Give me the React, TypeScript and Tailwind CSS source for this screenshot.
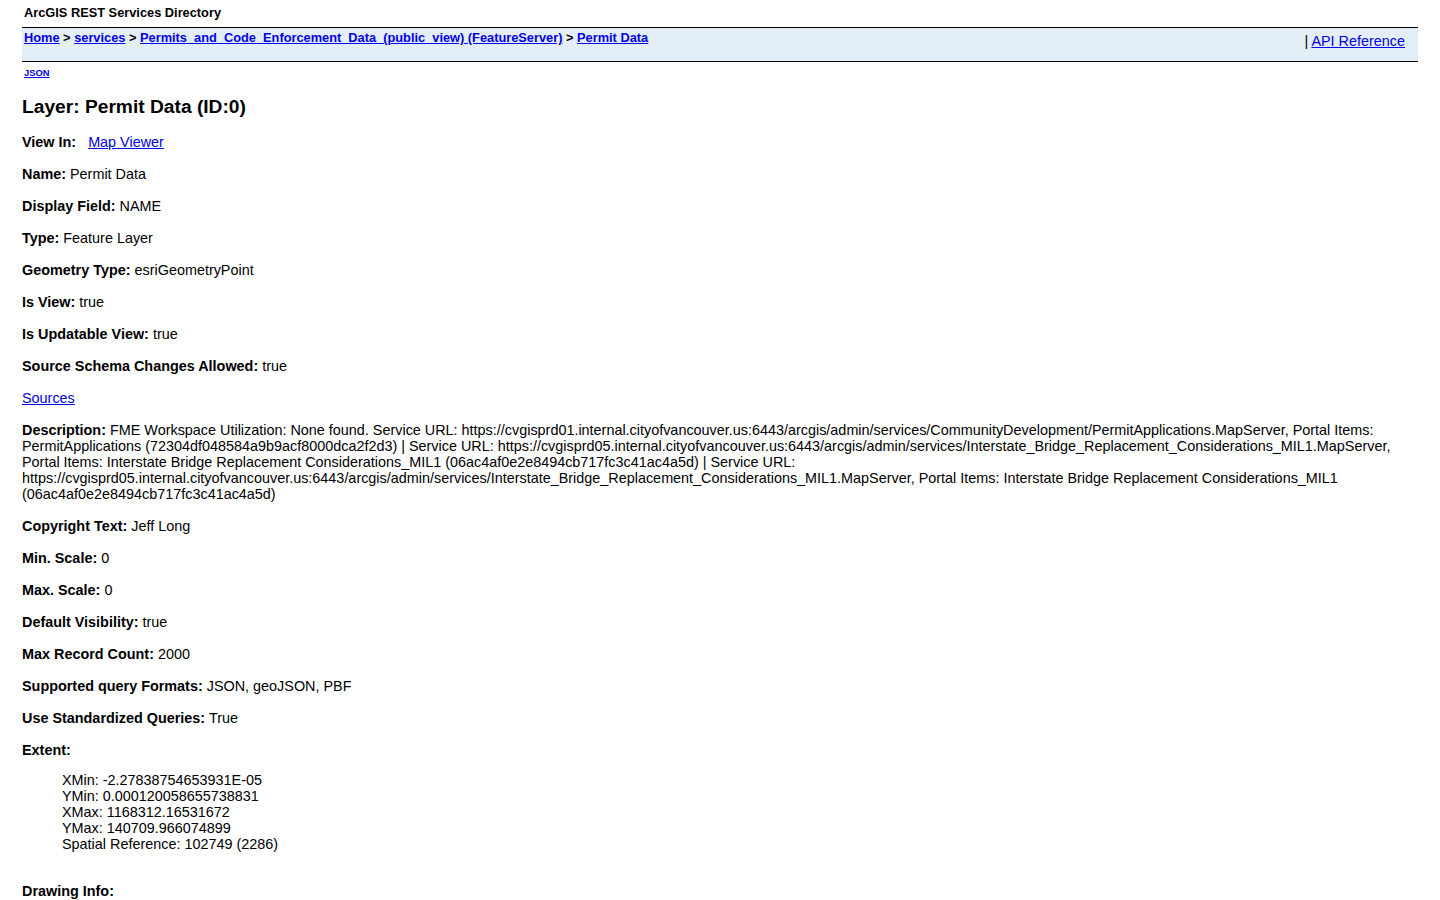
const font = { fontFamily: '"Liberation Sans", Arial, Helvetica, sans-serif' };

const Row = ({ label, children }: { label: string; children?: React.ReactNode }) => (
  <div className="mt-4 leading-4">
    <b>{label}</b> {children}
  </div>
);

const linkCls = 'text-[#0000ee] underline';

export default function App() {
  return (
    <div className="min-h-[900px] bg-white px-[22px] text-black text-[14.4px]" style={font}>
      {/* page banner */}
      <div className="pt-[5px] pl-[2px] text-[12.8px] font-bold leading-4">ArcGIS REST Services Directory</div>

      {/* breadcrumb bar */}
      <div className="mt-[6px] flex h-[35px] justify-between border-y border-black bg-[#e4eef7]">
        <div className="pt-[2px] pl-[2px] text-[12.8px] font-bold leading-4">
          <a className={linkCls}>Home</a> &gt; <a className={linkCls}>services</a> &gt;{' '}
          <a className={linkCls}>Permits_and_Code_Enforcement_Data_(public_view) (FeatureServer)</a> &gt;{' '}
          <a className={linkCls}>Permit Data</a>
        </div>
        <div className="pt-[5px] pr-[13px] leading-4">
          | <a className={linkCls}>API Reference</a>
        </div>
      </div>

      <div className="mt-[5px] pl-[2px] text-[9.4px] font-bold leading-3">
        <a className={linkCls}>JSON</a>
      </div>

      <h2 className="mt-[16px] text-[19.2px] font-bold leading-6">Layer: Permit Data (ID:0)</h2>

      <div className="mt-[15px] leading-4">
        <b>View In:</b>
        <a className={`${linkCls} ml-3`}>Map Viewer</a>
      </div>
      <Row label="Name:">Permit Data</Row>
      <Row label="Display Field:">NAME</Row>
      <Row label="Type:">Feature Layer</Row>
      <Row label="Geometry Type:">esriGeometryPoint</Row>
      <Row label="Is View:">true</Row>
      <Row label="Is Updatable View:">true</Row>
      <Row label="Source Schema Changes Allowed:">true</Row>
      <div className="mt-4 leading-4">
        <a className={linkCls}>Sources</a>
      </div>
      <Row label="Description:">
        FME Workspace Utilization: None found. Service URL:
        https://cvgisprd01.internal.cityofvancouver.us:6443/arcgis/admin/services/CommunityDevelopment/PermitApplications.MapServer,
        Portal Items: PermitApplications (72304df048584a9b9acf8000dca2f2d3) | Service URL:
        https://cvgisprd05.internal.cityofvancouver.us:6443/arcgis/admin/services/Interstate_Bridge_Replacement_Considerations_MIL1.MapServer,
        Portal Items: Interstate Bridge Replacement Considerations_MIL1 (06ac4af0e2e8494cb717fc3c41ac4a5d) | Service URL:
        https://cvgisprd05.internal.cityofvancouver.us:6443/arcgis/admin/services/Interstate_Bridge_Replacement_Considerations_MIL1.MapServer,
        Portal Items: Interstate Bridge Replacement Considerations_MIL1 (06ac4af0e2e8494cb717fc3c41ac4a5d)
      </Row>
      <Row label="Copyright Text:">Jeff Long</Row>
      <Row label="Min. Scale:">0</Row>
      <Row label="Max. Scale:">0</Row>
      <Row label="Default Visibility:">true</Row>
      <Row label="Max Record Count:">2000</Row>
      <Row label="Supported query Formats:">JSON, geoJSON, PBF</Row>
      <Row label="Use Standardized Queries:">True</Row>
      <Row label="Extent:" />

      <div className="mt-[14px] pl-10 leading-4">
        <div>XMin: -2.27838754653931E-05</div>
        <div>YMin: 0.000120058655738831</div>
        <div>XMax: 1168312.16531672</div>
        <div>YMax: 140709.966074899</div>
        <div>Spatial Reference: 102749 (2286)</div>
      </div>

      <div className="mt-[31px] leading-4">
        <b>Drawing Info:</b>
      </div>
    </div>
  );
}
